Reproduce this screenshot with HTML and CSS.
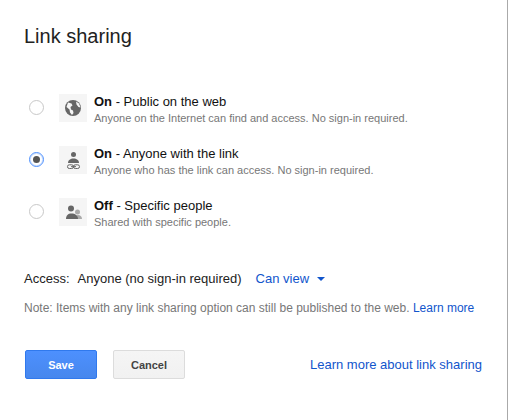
FILE: index.html
```html
<!DOCTYPE html>
<html lang="en">
<head>
<meta charset="utf-8">
<title>Link sharing</title>
<link rel="stylesheet" href="styles.css">
</head>
<body>
<main class="dialog">
  <h1 class="title">Link sharing</h1>
  <div class="options">
    <div class="option">
      <span class="radio"></span>
      <span class="icon">
        <svg viewBox="0 0 28 28" width="28" height="28"><circle cx="14" cy="14" r="8" fill="#666"/><path d="M9 8.500l3.500 1 1 2-2 1.500 .5 2.500 2 1 .5 2.500-1.500 2-2-2.500-.5-3-3-2.500zM17 7.500l3 2 1.500 4-2-.5-2-2.500z" fill="#f5f5f5"/></svg>
      </span>
      <div class="copy">
        <div class="label"><b>On</b> - Public on the web</div>
        <div class="desc">Anyone on the Internet can find and access. No sign-in required.</div>
      </div>
    </div>
    <div class="option">
      <span class="radio checked"></span>
      <span class="icon">
        <svg viewBox="0 0 28 28" width="28" height="28"><circle cx="14.500" cy="8.500" r="2.500" fill="#666"/><path d="M9 17c0-3 2.500-4.500 5.500-4.500S20 14 20 17z" fill="#666"/><rect x="8.500" y="18.800" width="6" height="3.700" rx="1.800" fill="none" stroke="#666"/><rect x="14.500" y="18.800" width="6" height="3.700" rx="1.800" fill="none" stroke="#666"/><path d="M12 20.650h5" stroke="#666"/></svg>
      </span>
      <div class="copy">
        <div class="label"><b>On</b> - Anyone with the link</div>
        <div class="desc">Anyone who has the link can access. No sign-in required.</div>
      </div>
    </div>
    <div class="option">
      <span class="radio"></span>
      <span class="icon">
        <svg viewBox="0 0 28 28" width="28" height="28"><circle cx="18.500" cy="14" r="2.500" fill="#aaa"/><path d="M16 21c0-2.500 1-4 3-4s4 1.500 4 4z" fill="#aaa"/><circle cx="12" cy="10.500" r="3" fill="#666"/><path d="M7 21c0-3.500 2-5.500 5.500-5.500S19 17.500 19 21z" fill="#666"/></svg>
      </span>
      <div class="copy">
        <div class="label"><b>Off</b> - Specific people</div>
        <div class="desc">Shared with specific people.</div>
      </div>
    </div>
  </div>
  <div class="access">
    <span class="access-label">Access:</span>
    <span class="access-value">Anyone (no sign-in required)</span>
    <a class="link can-view" href="#">Can view<span class="caret"></span></a>
  </div>
  <p class="note">Note: Items with any link sharing option can still be published to the web. <a class="link" href="#">Learn more</a></p>
  <div class="actions">
    <button class="btn primary" type="button">Save</button>
    <button class="btn" type="button">Cancel</button>
    <a class="link more" href="#">Learn more about link sharing</a>
  </div>
</main>
</body>
</html>
```

FILE: styles.css
```css
html, body {
  margin: 0;
  padding: 0;
  background: #fff;
}
body {
  width: 508px;
  height: 420px;
  overflow: hidden;
  font-family: "Liberation Sans", Arial, sans-serif;
  color: #000;
}
.dialog {
  box-sizing: border-box;
  width: 508px;
  height: 420px;
  padding: 24px 25px 0 24px;
  border-right: 1px solid #aaa;
}
.title {
  margin: 0;
  font-size: 20px;
  font-weight: 400;
  line-height: 24px;
  color: #222;
}
.options {
  display: flex;
  flex-direction: column;
  gap: 24px;
  margin-top: 46px;
}
.option {
  display: flex;
  align-items: flex-start;
  height: 28px;
}
.radio {
  box-sizing: border-box;
  width: 15px;
  height: 15px;
  margin: 6px 15px 0 5px;
  border: 1px solid #c8c8c8;
  border-radius: 50%;
  display: flex;
  align-items: center;
  justify-content: center;
}
.radio.checked {
  border-color: #4d90fe;
  box-shadow: inset 0 0 0 1px #cfe0fb;
}
.radio.checked::after {
  content: "";
  width: 7px;
  height: 7px;
  border-radius: 50%;
  background: #555;
}
.icon {
  width: 28px;
  height: 28px;
  background: #f5f5f5;
  margin-right: 7px;
  flex: none;
}
.icon svg {
  display: block;
}
.label {
  font-size: 13px;
  line-height: 16px;
  color: #111;
}
.desc {
  font-size: 11px;
  line-height: 16px;
  color: #777;
}
.access {
  display: flex;
  align-items: center;
  margin-top: 45px;
  font-size: 13px;
  line-height: 16px;
  color: #222;
}
.access-label {
  margin-right: 8px;
}
.link {
  color: #15c;
  text-decoration: none;
}
.can-view {
  margin-left: 14px;
  display: flex;
  align-items: center;
}
.caret {
  width: 0;
  height: 0;
  margin-left: 8px;
  border-left: 4px solid transparent;
  border-right: 4px solid transparent;
  border-top: 4px solid #15c;
}
.note {
  margin: 13px 0 0;
  font-size: 12px;
  line-height: 16px;
  color: #777;
  white-space: nowrap;
}
.actions {
  display: flex;
  align-items: center;
  margin-top: 34px;
  padding-left: 1px;
}
.btn {
  box-sizing: border-box;
  width: 72px;
  height: 29px;
  margin-right: 16px;
  padding: 0;
  border: 1px solid #dcdcdc;
  border-radius: 2px;
  background: linear-gradient(#f5f5f5, #f1f1f1);
  color: #444;
  font: 700 11px "Liberation Sans", Arial, sans-serif;
}
.btn.primary {
  border-color: #3079ed;
  background: linear-gradient(#4d90fe, #4787ed);
  color: #fff;
}
.more {
  margin-left: auto;
  font-size: 13px;
}
```
